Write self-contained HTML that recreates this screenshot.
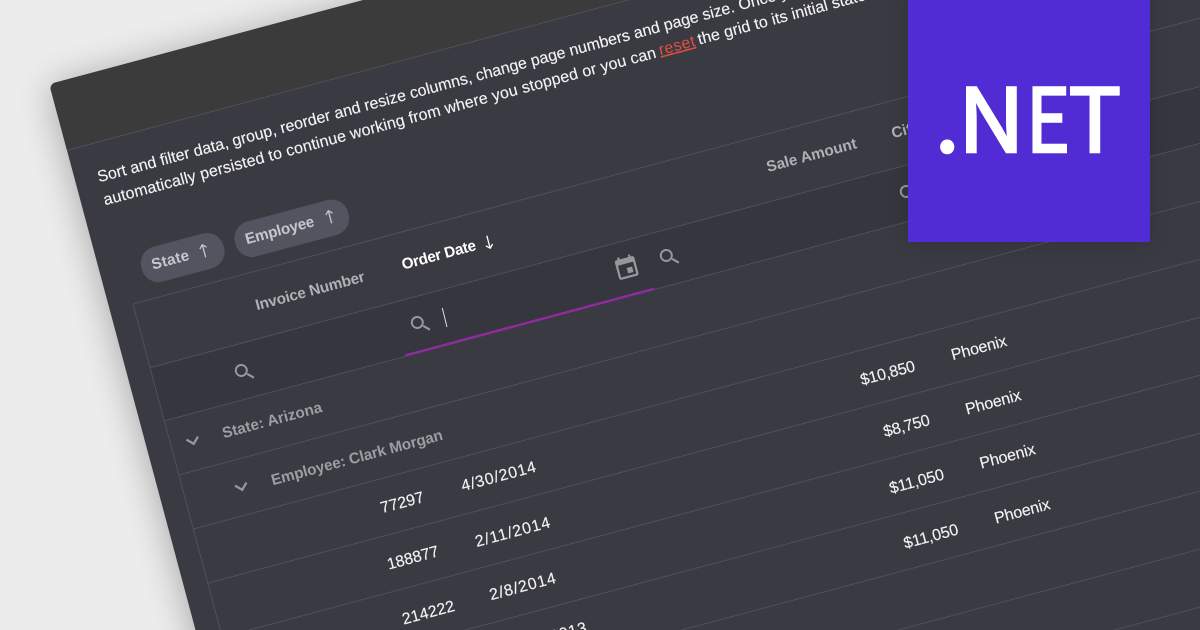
<!DOCTYPE html>
<html><head><meta charset="utf-8">
<style>
html,body{margin:0;padding:0;background:#ececec;width:1200px;height:630px;overflow:hidden}
svg{position:absolute;left:0;top:0;display:block}
text{font-family:"Liberation Sans",sans-serif;font-size:16px;fill:#f2f2f2;stroke:#f2f2f2;stroke-width:.15}
.h{font-size:15.3px;font-weight:bold;stroke:none}
.g{font-size:15.3px;font-weight:bold;fill:#9d9ea3;stroke:none}
.c{fill:#c6c7cc}
.m{fill:#b0b1b6}
#net{position:absolute;left:0;top:64.7px;width:1200px;height:100px;font:88px/100px "Noto Sans CJK JP","Liberation Sans",sans-serif;color:#fff;-webkit-text-stroke:2.5px #fff}
#net span{position:absolute;top:0;transform-origin:0 0}
</style></head><body>
<svg width="1200" height="630" viewBox="0 0 1200 630" xmlns="http://www.w3.org/2000/svg">
<defs>
<path id="s" d="M15.5 14h-.79l-.28-.27C15.41 12.59 16 11.11 16 9.5 16 5.91 13.09 3 9.5 3S3 5.91 3 9.5 5.91 16 9.5 16c1.61 0 3.09-.59 4.23-1.57l.27.28v.79l5 4.99L20.49 19l-4.99-5zm-6 0C7.01 14 5 11.99 5 9.5S7.01 5 9.5 5 14 7.01 14 9.5 11.99 14 9.5 14z"/>
<path id="v" d="M16.59 8.59L12 13.17 7.41 8.59 6 10l6 6 6-6z"/>
<filter id="sh" x="-20%" y="-20%" width="140%" height="140%"><feGaussianBlur stdDeviation="18"/></filter>
<filter id="sl" x="-30%" y="-30%" width="160%" height="160%"><feGaussianBlur stdDeviation="10"/></filter>
</defs>
<g transform="translate(50 85) rotate(-15)">
<rect x="-1" y="3" width="1700" height="1400" rx="6" fill="#000" opacity=".3" filter="url(#sh)"/>
<rect x="-.5" y="-1" width="1700" height="1400" rx="6" fill="#393a42"/>
<path d="M-.5 5a6 6 0 0 1 6-6H1700V67H-.5z" fill="#3b3b3b"/>
<rect x="23.5" y="299" width="1700" height="55" fill="#35363e"/>
<g stroke="#52535a" stroke-width=".9" fill="none">
<path d="M0 67.5H1700"/>
<path d="M23.5 233H1700M23.5 299H1700M23.5 354H1700M23.5 410H1700M23.5 466H1700M23.5 522H1700M23.5 578H1700M23.5 634H1700M23.5 690H1700M23.5 746H1700M23.5 802H1700M23.5 233V1400"/>
</g>
<rect x="273" y="352" width="258" height="2.4" fill="#92299f"/>
<rect x="41" y="183" width="85" height="36" rx="17" fill="#53545f"/>
<rect x="138" y="183" width="117" height="36" rx="17" fill="#53545f"/>
</g>

<g transform="translate(1 0.3)">
<text transform="translate(98 182) rotate(-15)" textLength="659">Sort and filter data, group, reorder and resize columns, change page numbers and page size.</text>
<text transform="translate(739 10) rotate(-15)">Once your changes are</text>
<text transform="translate(104 205) rotate(-15)" textLength="571.5">automatically persisted to continue working from where you stopped or you can</text>
<text transform="translate(659.3 55) rotate(-15)" textLength="37" style="fill:#e2503f;stroke:none;text-decoration:underline">reset</text>
<text transform="translate(698.3 44.3) rotate(-15)" textLength="178">the grid to its initial state.</text>

<text class="h c" transform="translate(152 269.3) rotate(-15)" textLength="38.4">State</text>
<text class="h c" transform="translate(245.7 244) rotate(-15)" textLength="71">Employee</text>
<text class="h m" transform="translate(256 310) rotate(-15)" textLength="112.5">Invoice Number</text>
<text class="h" style="fill:#fff" transform="translate(402.2 269.3) rotate(-15)" textLength="76.4">Order Date</text>
<text class="h m" transform="translate(767 171.7) rotate(-15)" textLength="92.8">Sale Amount</text>
<text class="h m" transform="translate(892 138) rotate(-15)">City</text>

<text class="g" transform="translate(222.7 438) rotate(-15)" textLength="102.8">State: Arizona</text>
<text class="g" transform="translate(271.7 485) rotate(-15)" textLength="177">Employee: Clark Morgan</text>

<text transform="translate(381 513) rotate(-15)" textLength="44.5">77297</text>
<text transform="translate(461.7 491) rotate(-15)" textLength="76.8">4/30/2014</text>
<text transform="translate(387.7 569.3) rotate(-15)" textLength="52.8">188877</text>
<text transform="translate(475.7 546.7) rotate(-15)" textLength="77">2/11/2014</text>
<text transform="translate(402.7 624.3) rotate(-15)" textLength="53.8">214222</text>
<text transform="translate(490 600) rotate(-15)" textLength="68">2/8/2014</text>
<text transform="translate(504.5 654) rotate(-15)" textLength="85">12/18/2013</text>

<text transform="translate(861 385) rotate(-15)" textLength="56">$10,850</text>
<text transform="translate(884 436.7) rotate(-15)" textLength="47.5">$8,750</text>
<text transform="translate(890 493.3) rotate(-15)" textLength="56">$11,050</text>
<text transform="translate(904.3 548.3) rotate(-15)" textLength="56">$11,050</text>

<text transform="translate(951.7 360) rotate(-15)" textLength="57">Phoenix</text>
<text transform="translate(966 414.3) rotate(-15)" textLength="57">Phoenix</text>
<text transform="translate(980.3 468.3) rotate(-15)" textLength="57">Phoenix</text>
<text transform="translate(995 523.3) rotate(-15)" textLength="57">Phoenix</text>
</g>

<g fill="none" stroke-width="1.3">
<path stroke="#c6c7cc" transform="translate(204 251) rotate(-15)" d="M0 6.5V-6.5M-3.5-3L0-6.5 3.5-3"/>
<path stroke="#c6c7cc" transform="translate(330 217) rotate(-15)" d="M0 6.5V-6.5M-3.5-3L0-6.5 3.5-3"/>
<path stroke="#fff" transform="translate(488.5 242) rotate(-15)" d="M0-6.5V6.5M-3.5 3L0 6.5 3.5 3"/>
</g>

<g fill="#97989d">
<use href="#s" transform="translate(669 257) rotate(-15) translate(-11.7 -11.7)"/>
<use href="#s" transform="translate(420 324) rotate(-15) translate(-11.7 -11.7)"/>
<use href="#s" transform="translate(244 372) rotate(-15) translate(-11.7 -11.7)"/>
<use href="#s" transform="translate(909 193) rotate(-15) translate(-11.7 -11.7)"/>
<path transform="translate(626.7 268) rotate(-15) translate(-12 -12) scale(1.12) translate(-1.3 -1.3)" d="M17 12h-5v5h5v-5zM16 1v2H8V1H6v2H5c-1.11 0-1.99.9-1.99 2L3 19c0 1.1.89 2 2 2h14c1.1 0 2-.9 2-2V5c0-1.1-.9-2-2-2h-1V1h-2zm3 18H5V8h14v11z"/>
<use href="#v" transform="translate(193 441) rotate(-15) scale(1.12) translate(-12 -12)"/>
<use href="#v" transform="translate(241.5 487) rotate(-15) scale(1.12) translate(-12 -12)"/>
</g>
<path d="M442.3 308L447 327" stroke="#eee" stroke-width=".9" fill="none"/>

<rect x="908" y="-10" width="242" height="252" fill="#000" opacity=".14" filter="url(#sl)"/>
<rect x="908" y="0" width="242" height="242" fill="#512bd4"/>
</svg>
<div id="net"><span style="left:935px">.</span><span style="left:958px;transform:scaleX(1.05)">N</span><span style="left:1026px;transform:scaleX(.85)">E</span><span style="left:1068.5px">T</span></div>
</body></html>
